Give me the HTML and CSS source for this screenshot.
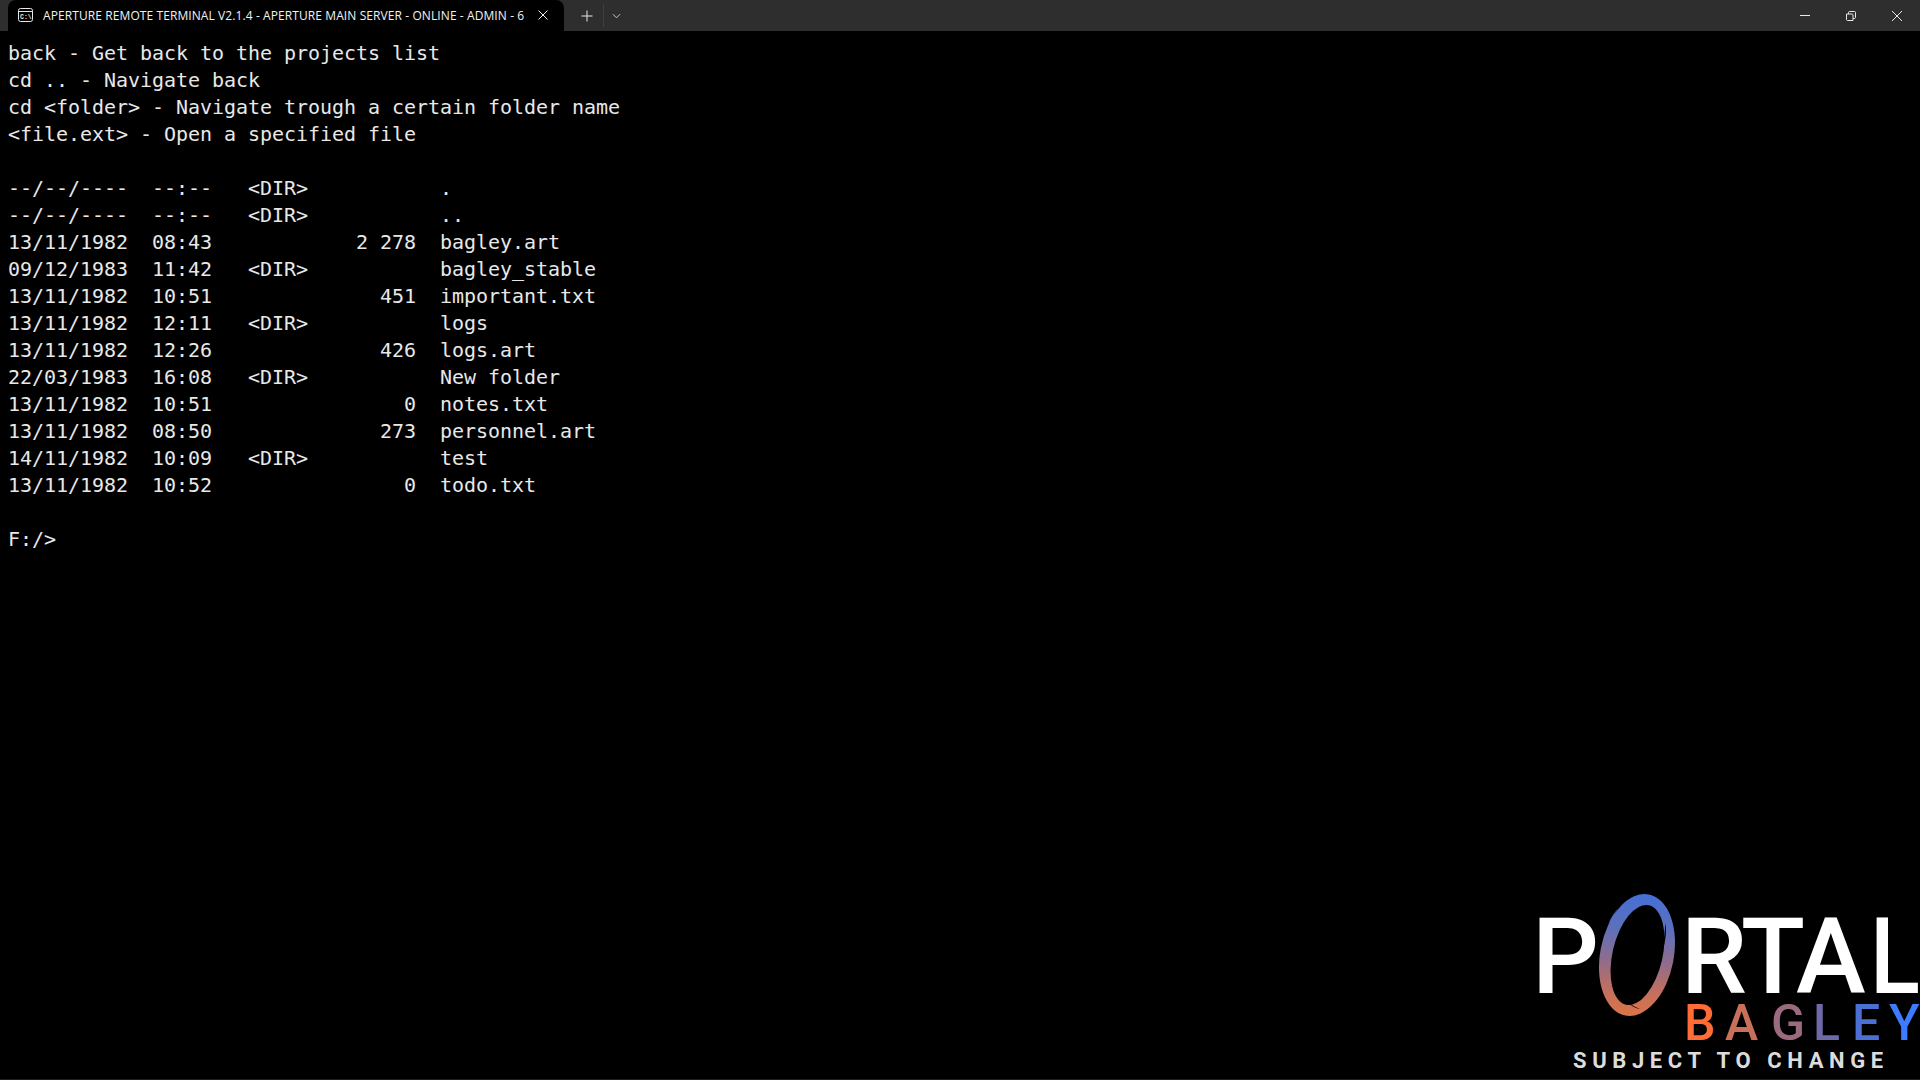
FILE: index.html
```html
<!DOCTYPE html>
<html lang="en">
<head>
<meta charset="utf-8">
<title>Aperture Remote Terminal</title>
<link rel="stylesheet" href="styles.css">
</head>
<body>
<div class="window">
  <header class="titlebar">
    <div class="tab">
      <svg class="tab-icon" viewBox="0 0 15 14" width="15" height="14" aria-hidden="true">
        <rect x="0.5" y="0.5" width="14" height="13" rx="2" fill="none" stroke="#e8e8e8"/>
        <path d="M1 3.5H14" stroke="#e8e8e8"/>
        <text x="2" y="10.5" class="tab-icon-text">C:\</text>
      </svg>
      <span class="tab-title">APERTURE REMOTE TERMINAL V2.1.4 - APERTURE MAIN SERVER - ONLINE - ADMIN - 6</span>
      <svg class="tab-close" viewBox="0 0 10 10" width="10" height="10" aria-hidden="true"><path d="M0.5 0.5L9.5 9.5M9.5 0.5L0.5 9.5" stroke="#f0f0f0" fill="none"/></svg>
    </div>
    <div class="tab-actions">
      <svg class="new-tab" viewBox="0 0 12 12" width="12" height="12" aria-hidden="true"><path d="M6 0.5V11.5M0.5 6H11.5" stroke="#e8e8e8" fill="none"/></svg>
      <span class="divider"></span>
      <svg class="chevron" viewBox="0 0 10 6" width="9" height="6" aria-hidden="true"><path d="M1 1L5 5L9 1" stroke="#d8d8d8" fill="none"/></svg>
    </div>
    <div class="controls">
      <svg viewBox="0 0 10 10" width="10" height="10" aria-hidden="true"><path d="M0 4.5H10" stroke="#e8e8e8" fill="none"/></svg>
      <svg viewBox="0 0 10 10" width="10" height="10" aria-hidden="true"><path d="M0.5 3H6C6.6 3 7 3.4 7 4V9.5H1.5C0.9 9.5 0.5 9.1 0.5 8.5ZM2.5 3V1.5C2.5 0.9 2.9 0.5 3.5 0.5H8.5C9.1 0.5 9.5 0.9 9.5 1.5V6.5C9.5 7.1 9.1 7.5 8.5 7.5H7" stroke="#e8e8e8" fill="none"/></svg>
      <svg viewBox="0 0 10 10" width="10" height="10" aria-hidden="true"><path d="M0 0L10 10M10 0L0 10" stroke="#e8e8e8" fill="none"/></svg>
    </div>
  </header>
  <main class="terminal">
<pre class="output">back - Get back to the projects list
cd .. - Navigate back
cd &lt;folder&gt; - Navigate trough a certain folder name
&lt;file.ext&gt; - Open a specified file

--/--/----  --:--   &lt;DIR&gt;           .
--/--/----  --:--   &lt;DIR&gt;           ..
13/11/1982  08:43            2 278  bagley.art
09/12/1983  11:42   &lt;DIR&gt;           bagley_stable
13/11/1982  10:51              451  important.txt
13/11/1982  12:11   &lt;DIR&gt;           logs
13/11/1982  12:26              426  logs.art
22/03/1983  16:08   &lt;DIR&gt;           New folder
13/11/1982  10:51                0  notes.txt
13/11/1982  08:50              273  personnel.art
14/11/1982  10:09   &lt;DIR&gt;           test
13/11/1982  10:52                0  todo.txt

F:/&gt;</pre>
  </main>
</div>
<svg class="logo" viewBox="1530 885 390 195" width="390" height="195" role="img" aria-label="Portal Bagley logo">
  <defs>
    <linearGradient id="ring" gradientUnits="userSpaceOnUse" x1="1640" y1="894" x2="1634" y2="1016">
      <stop offset="0" stop-color="#456fd6"/>
      <stop offset="0.3" stop-color="#5f70ba"/>
      <stop offset="0.55" stop-color="#8f6c8c"/>
      <stop offset="0.8" stop-color="#c2705f"/>
      <stop offset="1" stop-color="#dd7446"/>
    </linearGradient>
  </defs>
  <path fill="url(#ring)" fill-rule="evenodd" d="M1648.8 894.4A61.7 36.8 -79 1 1 1625.2 1015.6A61.7 36.8 -79 1 1 1648.8 894.4ZM1649 905.3A51 25 -77 1 0 1626 1004.7A51 25 -77 1 0 1649 905.3Z"/>
  <path fill="url(#ring)" d="M1618 908.5C1614 913 1610 919 1608.5 924.5C1611.5 920 1614.5 914 1618 908.5Z"/>
  <path fill="#000" d="M1614 978C1617 992 1626 1004 1640 1009C1628 1007 1619 994 1614 978Z"/>
  <path fill="#000" d="M1665.5 923C1667 934 1665 944 1660 961C1663 948 1664.5 935 1665.5 923Z"/>
  <text class="portal" x="1532" y="993">P</text>
  <text class="portal"><tspan x="1681" y="993">R</tspan><tspan x="1741" y="993">T</tspan><tspan x="1796" y="993">A</tspan></text>
  <text class="portal" transform="translate(1870 993) scale(0.88 1)">L</text>
  <text class="bagley" y="1040"><tspan x="1684" fill="#ff6c37">B</tspan><tspan x="1725" fill="#c9705a">A</tspan><tspan x="1771" fill="#9a6a7e">G</tspan><tspan x="1813" fill="#6d6aa9">L</tspan><tspan x="1852" fill="#4b70d3">E</tspan><tspan x="1889" fill="#3e7cff">Y</tspan></text>
  <text class="subject" x="1573" y="1068">SUBJECT TO CHANGE</text>
</svg>
</body>
</html>
```
FILE: styles.css
```css
* { box-sizing: border-box; }
html, body { margin: 0; height: 100%; background: #000; overflow: hidden; }
.window { display: flex; flex-direction: column; height: 100vh; background: #000; border-bottom: 1px solid #171a48; }
.titlebar { display: flex; align-items: stretch; height: 31px; background: #2e2e2e; padding-left: 8px; flex: none; }
.tab { display: flex; align-items: center; width: 556px; background: #000; border-radius: 8px 8px 0 0; padding: 0 0 1px 10px; color: #f2f2f2; }
.tab-icon { flex: none; }
.tab-icon-text { font: 700 6.5px "Liberation Mono", monospace; fill: #e8e8e8; }
.tab-title { font: 500 12px "Open Sans", sans-serif; letter-spacing: 0.09px; margin-left: 10px; white-space: nowrap; width: 481px; flex: none; }
.tab-close { margin-left: 14px; flex: none; }
.tab-actions { display: flex; align-items: center; padding-left: 17px; }
.divider { width: 1px; height: 23px; background: #3f3f3f; margin-left: 10px; }
.chevron { margin-left: 8px; }
.controls { margin-left: auto; display: flex; align-items: center; gap: 36px; padding-right: 18px; }
.terminal { flex: 1; padding: 9px 8px 0; }
.output { margin: 0; font-family: "DejaVu Sans Mono", monospace; font-size: 20px; line-height: 27px; letter-spacing: -0.04px; color: #e8e8e8; }
.logo { position: absolute; right: 0; bottom: 0; display: block; }
.portal { font: 500 105px Roboto, sans-serif; fill: #fff; }
.bagley { font: 500 50px Roboto, sans-serif; }
.subject { font: 700 22px Roboto, sans-serif; fill: #dcdcdc; letter-spacing: 5.6px; }
```
